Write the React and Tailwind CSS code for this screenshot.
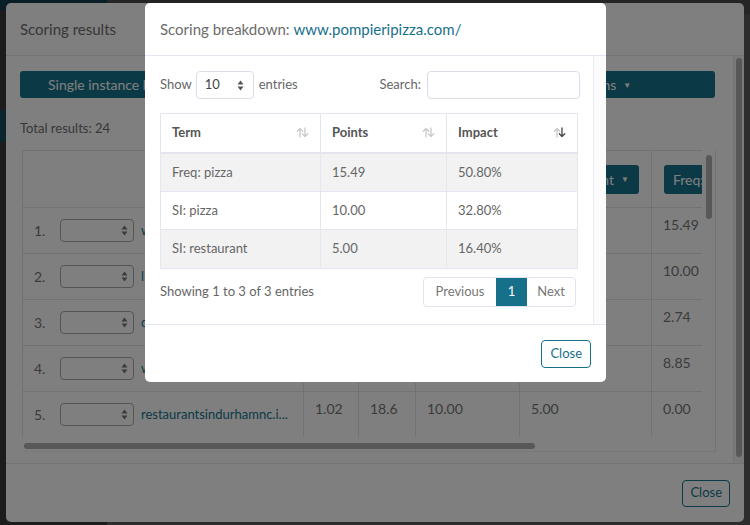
import React from 'react'

function SortIcon({ dir }) {
  const up = dir === 'up' ? '#444' : '#c9c9c9'
  const down = dir === 'down' ? '#444' : '#c9c9c9'
  return (
    <svg width="13" height="11" viewBox="0 0 13 11" fill="none" strokeWidth="1.3" strokeLinecap="round" strokeLinejoin="round">
      <path d="M4 10V1.5M1.3 4.2L4 1.5l2.7 2.7" stroke={up} />
      <path d="M9 1v8.5M6.3 6.8L9 9.5l2.7-2.7" stroke={down} />
    </svg>
  )
}

function Updown({ color = '#555' }) {
  return (
    <svg width="7" height="11" viewBox="0 0 7 11" fill={color}>
      <path d="M3.5 0.5L6.5 4.5H0.5z" />
      <path d="M3.5 10.5L0.5 6.5h6z" />
    </svg>
  )
}

const rows = [
  { n: '1.', link: 'www.pompieripizza.com/', v: ['', '', '', '', '15.49'] },
  { n: '2.', link: 'lilbrotherdurham.com/', v: ['', '', '', '', '10.00'] },
  { n: '3.', link: 'durhamrestaurants.com/', v: ['', '', '', '', '2.74'] },
  { n: '4.', link: 'www.bullcityburger.com/', v: ['', '', '', '', '8.85'] },
  { n: '5.', link: 'restaurantsindurhamnc.i...', v: ['1.02', '18.6', '10.00', '5.00', '0.00'] },
]

const terms = [
  { term: 'Freq: pizza', points: '15.49', impact: '50.80%' },
  { term: 'SI: pizza', points: '10.00', impact: '32.80%' },
  { term: 'SI: restaurant', points: '5.00', impact: '16.40%' },
]

function ScoringResults() {
  return (
    <div className="absolute left-[6px] top-[3px] w-[738px] h-[519px] bg-white rounded-[5px] flex flex-col text-[#767676]">
      <div className="h-[53px] shrink-0 px-[14px] flex items-center border-b border-[#e6e6ee] text-[15px] text-[#6e6e6e]">
        Scoring results
      </div>
      <div className="flex flex-1 min-h-0 border-b border-[#e6e6ee]">
        <div className="flex-1 min-w-0 pl-[14px] pr-[18px] pt-[15px]">
          <div className="flex gap-[4px] h-[27px] text-[14px] text-white">
            <button className="w-[244px] rounded-[3px] bg-[#16738d] flex items-center pl-[28px]">Single instance keywords</button>
            <button className="flex-1 rounded-[3px] bg-[#16738d] flex items-center justify-center">Frequency keywords</button>
            <button className="w-[236px] rounded-[3px] bg-[#16738d] flex items-center justify-center gap-[7px]">
              Columns <span className="text-[8px]">▼</span>
            </button>
          </div>
          <div className="mt-[20px] text-[13px] leading-[20px] text-[#707070]">Total results: 24</div>
          <div className="mt-[12px] ml-[2px] w-[694px] border-r border-[#e6e6ee]">
            <div className="flex h-[287px]">
              <div className="w-[681px] overflow-hidden">
                <table className="table-fixed border-collapse w-[749px] text-[14px]">
                  <colgroup>
                    <col className="w-[281px]" />
                    <col className="w-[55px]" />
                    <col className="w-[57px]" />
                    <col className="w-[104px]" />
                    <col className="w-[132px]" />
                    <col className="w-[120px]" />
                  </colgroup>
                  <thead>
                    <tr className="h-[57px]">
                      <th className="border border-[#e3e3ec]"></th>
                      <th className="border border-[#e3e3ec]"></th>
                      <th className="border border-[#e3e3ec]"></th>
                      <th className="border border-[#e3e3ec]"></th>
                      <th className="border border-[#e3e3ec] px-[12px] text-right">
                        <span className="inline-flex items-center gap-[7px] h-[29px] px-[10px] rounded-[3px] bg-[#16738d] text-white font-normal whitespace-nowrap">
                          Count <span className="text-[8px]">▼</span>
                        </span>
                      </th>
                      <th className="border border-[#e3e3ec] px-[12px] text-left">
                        <span className="inline-flex items-center gap-[7px] h-[29px] px-[9px] rounded-[3px] bg-[#16738d] text-white font-normal whitespace-nowrap">
                          Freq: pizza <span className="text-[8px]">▼</span>
                        </span>
                      </th>
                    </tr>
                  </thead>
                  <tbody>
                    {rows.map((r) => (
                      <tr key={r.n} className="h-[46px]">
                        <td className="border border-[#e3e3ec] px-[11px]">
                          <div className="flex items-center">
                            <span className="w-[26px]">{r.n}</span>
                            <span className="w-[74px] h-[23px] rounded-[4px] border border-[#aaa] flex items-center justify-end pr-[5px]">
                              <Updown color="#777" />
                            </span>
                            <span className="ml-[7px] text-[13px] text-[#16738d] whitespace-nowrap">{r.link}</span>
                          </div>
                        </td>
                        {r.v.map((v, i) => (
                          <td key={i} className="border border-[#e3e3ec] px-[11px] pt-[7px] align-top leading-[20px]">{v}</td>
                        ))}
                      </tr>
                    ))}
                  </tbody>
                </table>
              </div>
              <div className="w-[13px] pl-[4px] pt-[5px]">
                <div className="w-[6px] h-[64px] rounded-full bg-[#b0b0b0]"></div>
              </div>
            </div>
            <div className="h-[15px] pt-[6px] pl-[2px] border-b border-[#eeeeee]">
              <div className="w-[511px] h-[6px] rounded-full bg-[#b0b0b0]"></div>
            </div>
          </div>
        </div>
        <div className="w-[11px] border-l border-[#e6e6ee] bg-[#f4f4f4] pt-[2px] pl-[2px]">
          <div className="w-[6px] h-[399px] rounded-full bg-[#b0b0b0]"></div>
        </div>
      </div>
      <div className="h-[58px] shrink-0 flex items-center justify-end pr-[14px]">
        <button className="h-[27px] px-[7px] rounded-[4px] border border-[#16738d] text-[#16738d] text-[13px]">Close</button>
      </div>
    </div>
  )
}

function ScoringBreakdown() {
  return (
    <div className="absolute left-[145px] top-[3px] w-[461px] h-[379px] bg-white rounded-[5px] flex flex-col text-[#666]">
      <div className="h-[53px] shrink-0 px-[15px] flex items-center border-b border-[#e6e6f0] text-[15px] text-[#6c6c6c]">
        Scoring breakdown:&nbsp;<span className="text-[#17708a]">www.pompieripizza.com/</span>
      </div>
      <div className="flex flex-1 min-h-0 border-b border-[#e6e6f0]">
        <div className="flex-1 pl-[15px] pr-[13px] pt-[15px]">
          <div className="flex items-center justify-between h-[28px] text-[13px] text-[#666]">
            <div className="flex items-center">
              <span>Show</span>
              <span className="ml-[4px] w-[58px] h-[28px] rounded-[4px] border border-[#dcdcea] flex items-center justify-between pl-[8px] pr-[9px] text-[13px] text-[#444]">
                10 <Updown color="#555" />
              </span>
              <span className="ml-[5px]">entries</span>
            </div>
            <div className="flex items-center">
              <span>Search:</span>
              <span className="ml-[6px] w-[153px] h-[28px] rounded-[4px] border border-[#dcdcea]"></span>
            </div>
          </div>
          <table className="mt-[14px] w-[417px] table-fixed border-collapse text-[13px]">
            <colgroup>
              <col className="w-[160px]" />
              <col className="w-[126px]" />
              <col className="w-[131px]" />
            </colgroup>
            <thead>
              <tr className="h-[39px] text-[#555]">
                {['Term', 'Points', 'Impact'].map((h) => (
                  <th key={h} className="border border-[#e6e6f0] border-b-2 border-b-[#e4e4ee] px-[11px] text-left font-bold">
                    <div className="flex items-center justify-between">
                      {h}
                      <SortIcon dir={h === 'Impact' ? 'down' : ''} />
                    </div>
                  </th>
                ))}
              </tr>
            </thead>
            <tbody>
              {terms.map((t, i) => (
                <tr key={t.term} className={i % 2 === 0 ? 'h-[39px] bg-[#f2f2f2]' : 'h-[38px] bg-white'}>
                  <td className="border border-[#e6e6f0] px-[11px]">{t.term}</td>
                  <td className="border border-[#e6e6f0] px-[11px]">{t.points}</td>
                  <td className="border border-[#e6e6f0] px-[11px]">{t.impact}</td>
                </tr>
              ))}
            </tbody>
          </table>
          <div className="mt-[8px] flex items-center justify-between pr-[4px]">
            <span className="text-[13px] text-[#666]">Showing 1 to 3 of 3 entries</span>
            <div className="flex h-[30px] text-[13px] rounded-[4px] border border-[#e2e2ee] overflow-hidden">
              <span className="w-[72px] flex items-center justify-center text-[#777]">Previous</span>
              <span className="w-[31px] flex items-center justify-center bg-[#17708a] text-white">1</span>
              <span className="w-[48px] flex items-center justify-center text-[#777]">Next</span>
            </div>
          </div>
        </div>
        <div className="w-[13px] border-l border-[#ececf2] bg-[#fbfbfb]"></div>
      </div>
      <div className="h-[57px] shrink-0 flex items-center justify-end pr-[15px]">
        <button className="h-[28px] px-[8px] rounded-[4px] border border-[#17708a] text-[#17708a] text-[13px]">Close</button>
      </div>
    </div>
  )
}

export default function App() {
  return (
    <div className="relative w-[750px] h-[525px] overflow-hidden bg-[#5a5a5a] font-['Lato',sans-serif]">
      {/* page behind the first modal, already dimmed by its backdrop */}
      <div className="flex h-full">
        <div className="w-[107px] bg-[#383838] flex flex-col">
          <div className="h-[10px] bg-[#143f4a]"></div>
          <div className="h-[100px]"></div>
          <div className="h-[32px] bg-[#164a58]"></div>
        </div>
        <div className="flex-1 flex flex-col">
          <div className="h-[14px] bg-[#4a4a4a]"></div>
        </div>
      </div>
      <ScoringResults />
      <div className="absolute inset-0 bg-black/50"></div>
      <ScoringBreakdown />
    </div>
  )
}
